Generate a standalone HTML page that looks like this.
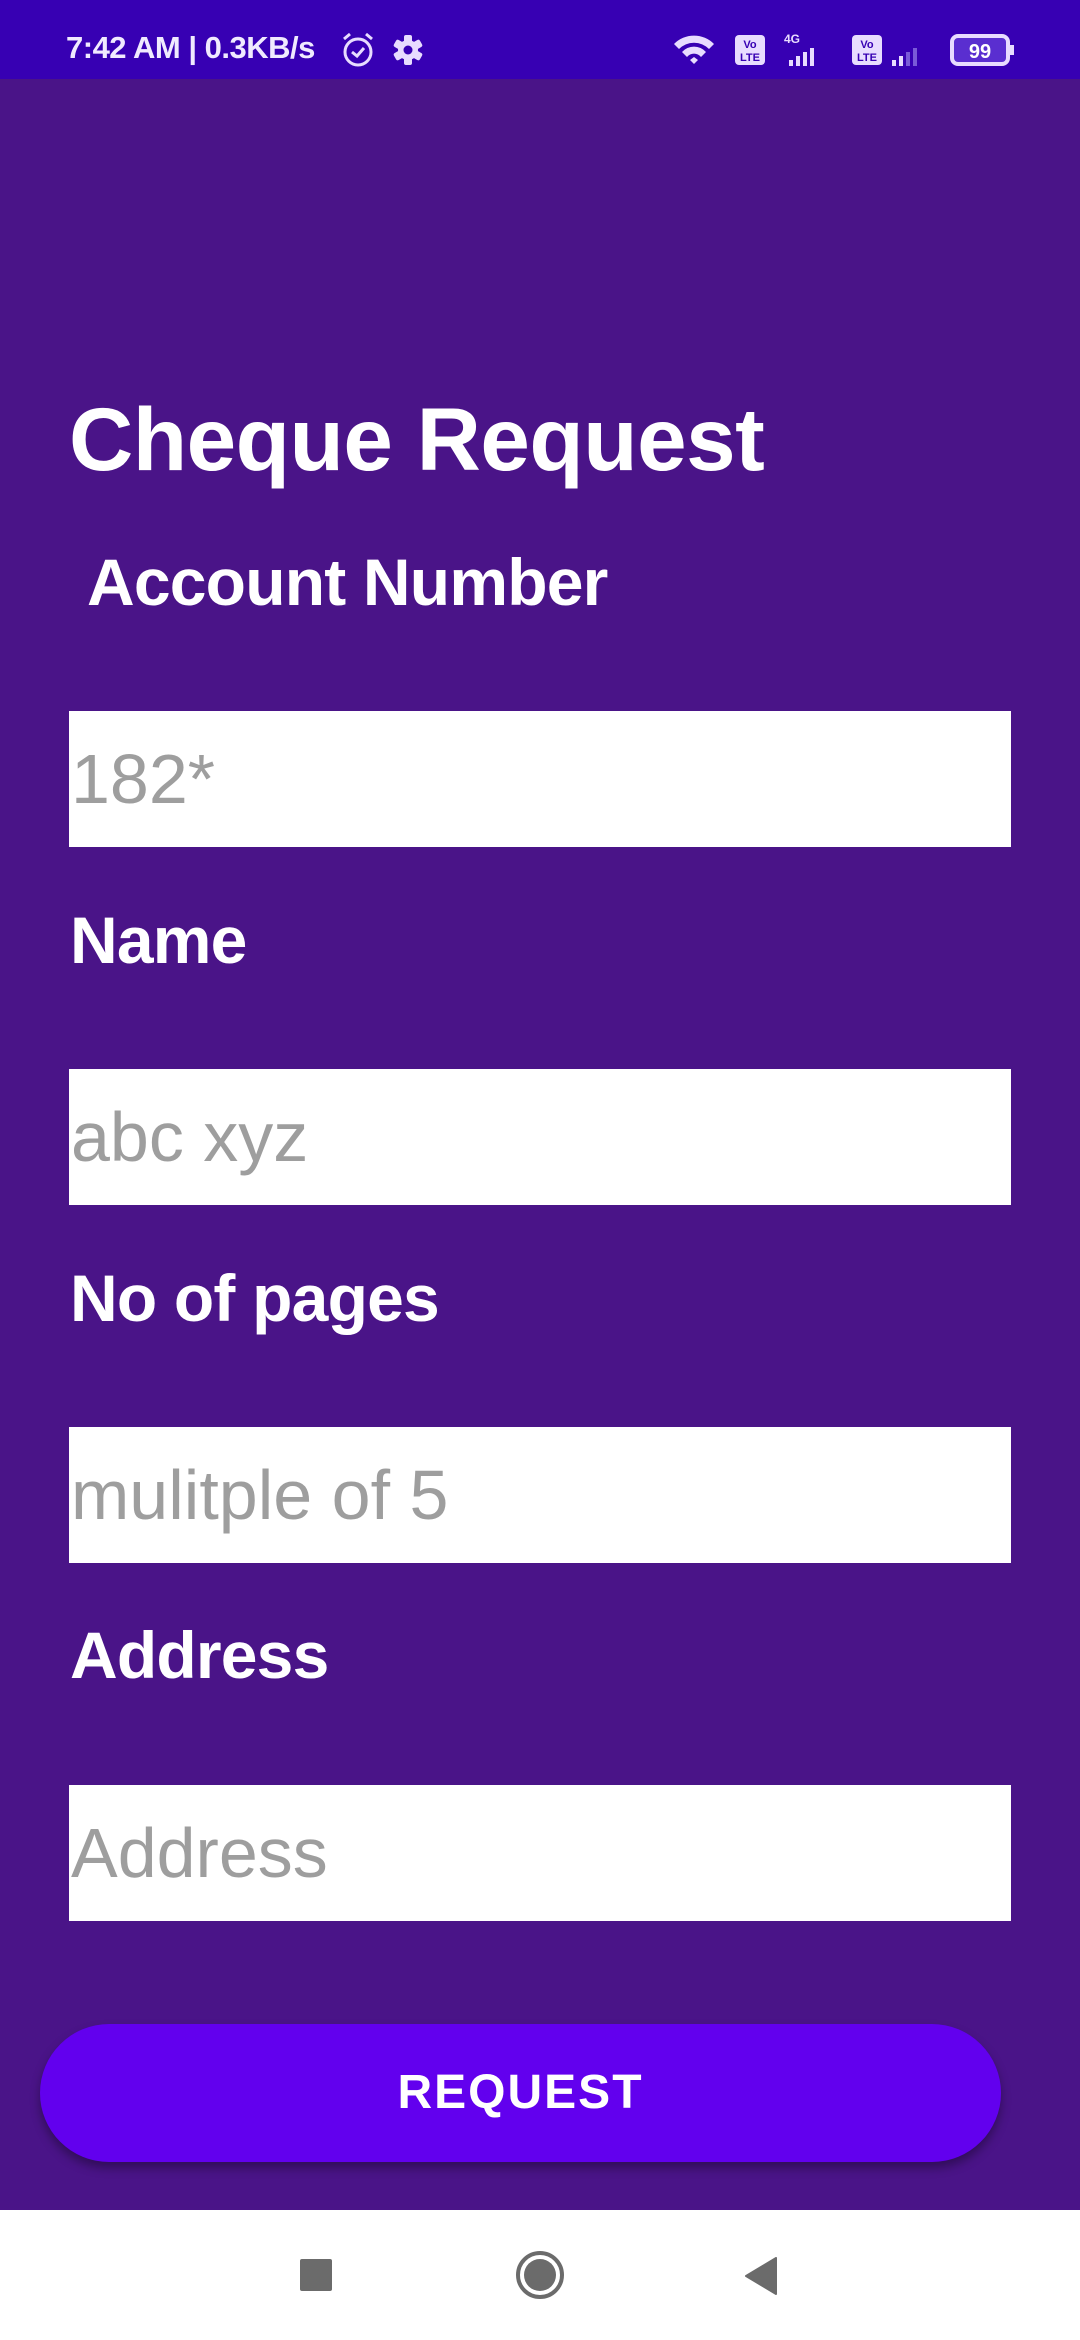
<!DOCTYPE html>
<html><head><meta charset="utf-8"><style>
*{margin:0;padding:0;box-sizing:border-box}
body{width:1080px;height:2340px;background:#4a1488;position:relative;overflow:hidden;font-family:"Liberation Sans",Roboto,sans-serif;color:#fff}
.sb{position:absolute;left:0;top:0;width:1080px;height:79px;background:#3700b3}
.t{position:absolute;font-weight:bold;white-space:nowrap}
.lb{font-size:66px;letter-spacing:-0.8px}
.in{position:absolute;left:69px;width:942px;height:136px;background:#fff;color:#9e9e9e;font-size:70px;padding-left:2px;line-height:136px}
.btn{position:absolute;left:40px;top:2024px;width:961px;height:138px;border-radius:69px;background:#6200ee;box-shadow:0 6px 10px rgba(0,0,0,.35);text-align:center;line-height:138px;font-size:48px;font-weight:bold;letter-spacing:2px}
.nav{position:absolute;left:0;top:2210px;width:1080px;height:130px;background:#fff}
</style></head><body>
<div class="sb">
<div class="t" style="left:66px;top:30px;font-size:31px;color:#f0eaff;letter-spacing:-0.5px">7:42 AM | 0.3KB/s</div>
<svg style="position:absolute;left:340px;top:31px" width="36" height="38" viewBox="0 0 36 38"><circle cx="18" cy="21" r="13" fill="none" stroke="#e8dcff" stroke-width="3"/><path d="M12 21l5 4 7-8" fill="none" stroke="#e8dcff" stroke-width="3"/><path d="M4 8l6-5M32 8l-6-5" stroke="#e8dcff" stroke-width="3"/></svg>
<svg style="position:absolute;left:392px;top:34px" width="32" height="32" viewBox="0 0 32 32"><g fill="#e8dcff"><circle cx="16" cy="16" r="10"/><rect x="12" y="1" width="8" height="30" rx="2"/><rect x="12" y="1" width="8" height="30" rx="2" transform="rotate(60 16 16)"/><rect x="12" y="1" width="8" height="30" rx="2" transform="rotate(120 16 16)"/></g><circle cx="16" cy="16" r="4.5" fill="#3700b3"/></svg>
<svg style="position:absolute;left:672px;top:30px" width="350" height="40" viewBox="0 0 350 40">
<path d="M2 14a28 28 0 0 1 40 0l-5 5a21 21 0 0 0-30 0zM10 22a16 16 0 0 1 24 0l-5 5a9 9 0 0 0-14 0zM18 30l4-3 4 3-4 4z" fill="#e8dcff"/>
<rect x="63" y="5" width="30" height="30" rx="4" fill="#e8dcff"/><text x="78" y="18" font-size="11" text-anchor="middle" fill="#3700b3" font-weight="bold">Vo</text><text x="78" y="31" font-size="11" text-anchor="middle" fill="#3700b3" font-weight="bold">LTE</text>
<text x="112" y="13" font-size="12" fill="#e8dcff" font-weight="bold">4G</text>
<path d="M117 36h4v-6h-4zM124 36h4v-10h-4zM131 36h4v-14h-4zM138 36h4v-18h-4z" fill="#e8dcff"/>
<rect x="180" y="5" width="30" height="30" rx="4" fill="#e8dcff"/><text x="195" y="18" font-size="11" text-anchor="middle" fill="#3700b3" font-weight="bold">Vo</text><text x="195" y="31" font-size="11" text-anchor="middle" fill="#3700b3" font-weight="bold">LTE</text>
<path d="M220 36h4v-6h-4zM227 36h4v-10h-4z" fill="#e8dcff"/><path d="M234 36h4v-14h-4zM241 36h4v-18h-4z" fill="#7a5ad8"/>
<rect x="280" y="6" width="56" height="28" rx="6" fill="#5a2ed0" stroke="#e8dcff" stroke-width="4"/><rect x="338" y="15" width="4" height="10" fill="#e8dcff"/>
<text x="308" y="28" font-size="20" text-anchor="middle" fill="#fff" font-weight="bold">99</text></svg>
</div>
<div class="t" style="left:69px;top:388px;font-size:89px;letter-spacing:-0.5px">Cheque Request</div>
<div class="t lb" style="left:87px;top:544px">Account Number</div>
<div class="in" style="top:711px">182*</div>
<div class="t lb" style="left:70px;top:902px">Name</div>
<div class="in" style="top:1069px">abc xyz</div>
<div class="t lb" style="left:70px;top:1260px">No of pages</div>
<div class="in" style="top:1427px">mulitple of 5</div>
<div class="t lb" style="left:70px;top:1617px">Address</div>
<div class="in" style="top:1785px">Address</div>
<div class="btn">REQUEST</div>
<div class="nav">
<div style="position:absolute;left:300px;top:49px;width:32px;height:32px;background:#6b6b6b;border-radius:2px"></div>
<div style="position:absolute;left:516px;top:41px;width:48px;height:48px;border:4px solid #6b6b6b;border-radius:50%"><div style="position:absolute;left:4px;top:4px;width:32px;height:32px;background:#6b6b6b;border-radius:50%"></div></div>
<svg style="position:absolute;left:744px;top:47px" width="34" height="38" viewBox="0 0 34 38"><path d="M32 1v36L2 19z" fill="#6b6b6b" stroke="#6b6b6b" stroke-linejoin="round" stroke-width="2"/></svg>
</div>
</body></html>
